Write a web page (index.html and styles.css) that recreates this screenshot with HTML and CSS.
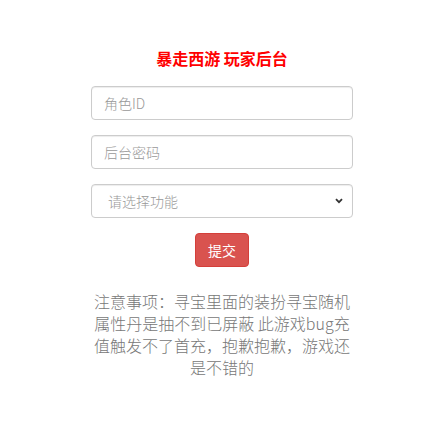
FILE: index.html
```html
<!DOCTYPE html>
<html lang="zh-CN">
<head>
<meta charset="utf-8">
<title>暴走西游 玩家后台</title>
<link rel="stylesheet" href="styles.css">
</head>
<body>
<div class="page">
  <h1 class="title">暴走西游 玩家后台</h1>
  <form class="form">
    <div class="form-group">
      <input class="form-control" type="text" placeholder="角色ID">
    </div>
    <div class="form-group">
      <input class="form-control" type="password" placeholder="后台密码">
    </div>
    <div class="form-group select-wrap">
      <select class="form-control select">
        <option>请选择功能</option>
      </select>
      <svg class="chev" width="8" height="6" viewBox="0 0 8 6"><path d="M1 1.2 L4 4.2 L7 1.2" fill="none" stroke="#333" stroke-width="1.8"/></svg>
    </div>
    <div class="actions">
      <button class="btn-danger" type="button">提交</button>
    </div>
  </form>
  <p class="note">注意事项：寻宝里面的装扮寻宝随机属性丹是抽不到已屏蔽 此游戏bug充值触发不了首充，抱歉抱歉，游戏还是不错的</p>
</div>
</body>
</html>
```
FILE: styles.css
```css
* { box-sizing: border-box; }
html, body { margin: 0; padding: 0; background: #fff; }
body {
  font-family: "Noto Sans CJK SC", "Liberation Sans", sans-serif;
  font-size: 14px;
  line-height: 1.42857;
  color: #333;
}
.page {
  width: 262px;
  margin-left: 91px;
  padding-top: 47px;
}
.title {
  margin: 0 0 16px;
  font-size: 16px;
  line-height: 23px;
  font-weight: bold;
  color: #f00;
  text-align: center;
}
.form-group { margin-bottom: 15px; }
.form-control {
  display: block;
  width: 100%;
  height: 34px;
  padding: 6px 12px;
  font-family: inherit;
  font-size: 14px;
  font-weight: 300;
  color: #555;
  background: #fff;
  border: 1px solid #ccc;
  border-radius: 4px;
  box-shadow: inset 0 1px 1px rgba(0,0,0,.075);
  outline: none;
}
.form-control::placeholder { color: #999; }
.select-wrap { position: relative; }
.select {
  appearance: none;
  -webkit-appearance: none;
  padding-left: 16px;
  color: #999;
}
.chev {
  position: absolute;
  right: 10px;
  top: 14px;
}
.actions {
  display: flex;
  justify-content: center;
  margin-bottom: 23px;
}
.btn-danger {
  height: 34px;
  padding: 6px 12px;
  font-family: inherit;
  font-size: 14px;
  line-height: 20px;
  color: #fff;
  background: #d9534f;
  border: 1px solid #d43f3a;
  border-radius: 4px;
}
.note {
  margin: 0;
  font-size: 16px;
  line-height: 22px;
  font-weight: 300;
  color: #777;
  text-align: center;
}
```
